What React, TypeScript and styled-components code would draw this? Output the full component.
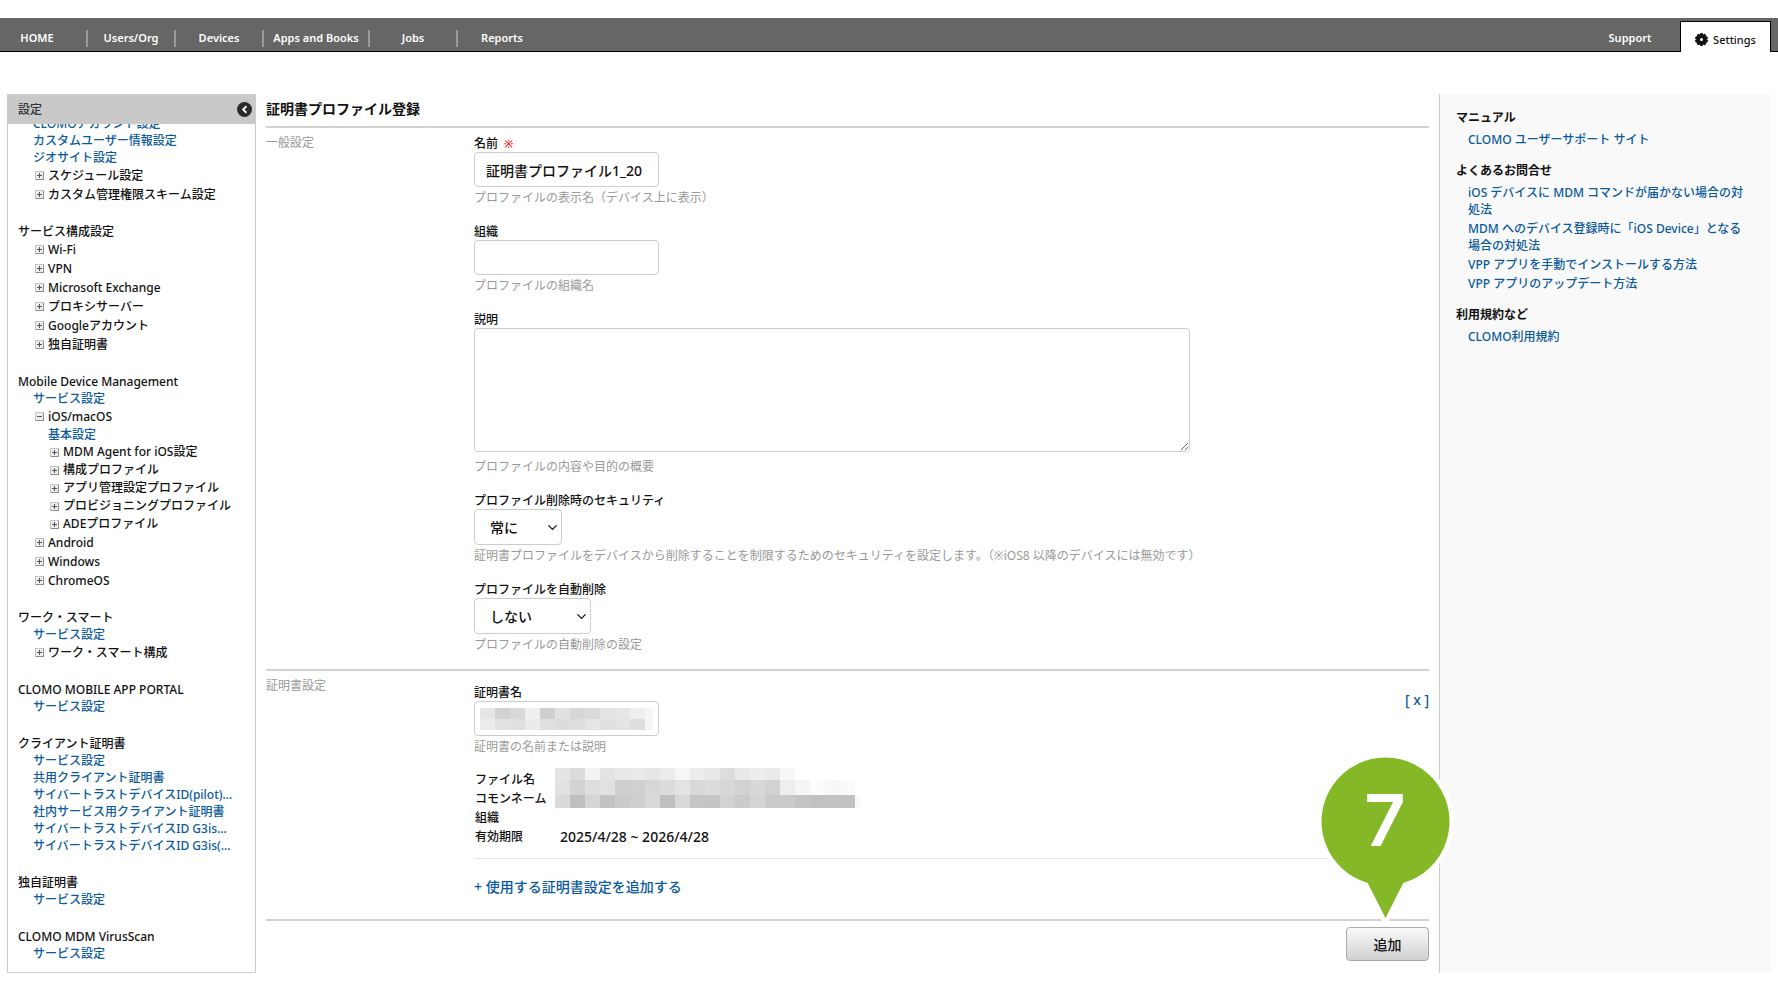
import React from "react";
import styled, { createGlobalStyle, css } from "styled-components";
import { ChevronDown, ChevronLeft } from "lucide-react";

const latin = `"Noto Sans", "Noto Sans CJK JP", sans-serif`;
const linkColor = "#0b5a9b";
const lineColor = "#cccccc";

const GlobalStyle = createGlobalStyle`
  *, *::before, *::after { box-sizing: border-box; }
  body {
    margin: 0;
    background: #fff;
    color: #111;
    font: 500 12px/16px ${latin};
  }
  input, select, textarea, button { font-family: inherit; font-weight: inherit; color: inherit; }
  ul { list-style: none; margin: 0; padding: 0; }
`;

const Page = styled.div`
  padding: 18px 0 27px;
`;

/* ---------- top navigation ---------- */

const TopBar = styled.header`
  display: flex;
  align-items: stretch;
  height: 34px;
  padding-right: 7px;
  background: #666;
  border-bottom: 1px solid #000;
`;

const Menu = styled.nav`
  display: flex;
  flex: 1;
  padding-top: 12px;
`;

const MenuLink = styled.a<{ $wide?: boolean; $first?: boolean; $last?: boolean }>`
  width: ${(p) => (p.$wide ? 106 : 88)}px;
  height: 17px;
  padding-right: ${(p) => (p.$first ? 12 : 0)}px;
  border-right: ${(p) => (p.$last ? 0 : 2)}px solid #999;
  color: #fff;
  font-size: 11px;
  line-height: 16px;
  font-weight: 600;
  text-align: center;
  text-decoration: none;
  white-space: nowrap;
`;

const SupportLink = styled(MenuLink)`
  width: 100px;
  margin-top: 12px;
`;

const SettingsTab = styled.a`
  display: flex;
  align-items: center;
  justify-content: center;
  gap: 5px;
  width: 91px;
  margin: 3px 0 -1px;
  border: 1px solid #000;
  border-bottom: 0;
  background: #fff;
  color: #111;
  font-size: 11px;
  font-weight: 500;
  padding-top: 5px;
  text-decoration: none;
`;

/* ---------- page columns ---------- */

const Columns = styled.div`
  display: grid;
  grid-template-columns: 249px minmax(0, 1fr) 332px;
  margin: 42px 7px 0 7px;
`;

const Sidebar = styled.aside`
  border: 1px solid ${lineColor};
`;

const SidebarHead = styled.div`
  display: flex;
  align-items: center;
  justify-content: space-between;
  height: 29px;
  padding: 0 3px 0 10px;
  background: #c9c9c9;
  color: #333;
`;

const CollapseButton = styled.button`
  display: grid;
  place-items: center;
  width: 15px;
  height: 15px;
  padding: 0;
  border: 0;
  border-radius: 50%;
  background: #2b2b2b;
  color: #fff;
`;

const SidebarScroll = styled.div`
  overflow: hidden;
  padding-bottom: 10px;
`;

const Group = styled.section<{ $scrolled?: boolean; $endsInLink?: boolean }>`
  margin-top: ${(p) => (p.$scrolled ? -9 : 0)}px;
  margin-bottom: ${(p) => (p.$endsInLink ? 20 : 19)}px;
  padding-left: 10px;
  &:last-child { margin-bottom: 0; }
`;

const GroupTitle = styled.h2`
  margin: 0;
  font-size: 12px;
  line-height: 17px;
  font-weight: 500;
`;

const indent = css<{ $level: number }>`
  padding-left: ${(p) => 15 * p.$level}px;
`;

const LinkRow = styled.li<{ $level: number }>`
  ${indent}
  line-height: 17px;
  white-space: nowrap;
`;

const TreeRow = styled.li<{ $level: number }>`
  ${indent}
  display: flex;
  align-items: center;
  height: ${(p) => (p.$level > 1 ? 18 : 19)}px;
  gap: 4px;
  white-space: nowrap;
`;

const Link = styled.a`
  color: ${linkColor};
  text-decoration: none;
`;

const ToggleButton = styled.button`
  display: flex;
  margin-left: 2px;
  padding: 0;
  border: 0;
  background: none;
`;

/* ---------- form ---------- */

const Main = styled.main`
  padding: 0 10px;
`;

const Title = styled.h1`
  height: 32px;
  margin: 0;
  font-size: 14px;
  line-height: 30px;
  font-weight: 700;
`;

const Section = styled.section<{ $tall?: boolean }>`
  display: grid;
  grid-template-columns: 208px minmax(0, 1fr);
  border-top: 2px solid #d2d2d2;
  padding: ${(p) => (p.$tall ? "14px 0 20px" : "8px 0 15px")};
`;

const SectionName = styled.h2<{ $raised?: boolean }>`
  margin: ${(p) => (p.$raised ? -7 : -1)}px 0 0;
  color: #999;
  font-size: 12px;
  line-height: 16px;
  font-weight: 400;
`;

const Fields = styled.div<{ $tight?: boolean }>`
  display: flex;
  flex-direction: column;
  gap: ${(p) => (p.$tight ? 14 : 17)}px;
`;

const Field = styled.div`
  display: flex;
  flex-direction: column;
  align-items: flex-start;
`;

const Label = styled.label`
  line-height: 16px;
`;

const Required = styled.span`
  margin-left: 6px;
  color: #f00;
  font-size: 11px;
`;

const Hint = styled.p<{ $spaced?: boolean }>`
  margin: ${(p) => (p.$spaced ? 6 : 2)}px 0 0;
  color: #999;
  font-weight: 400;
  line-height: 18px;
`;

const control = css`
  border: 1px solid ${lineColor};
  border-radius: 4px;
  background: #fff;
  font-size: 14px;
`;

const TextInput = styled.input`
  ${control}
  display: block;
  width: 185px;
  height: 35px;
  padding: 0 11px;
`;

const TextArea = styled.textarea`
  ${control}
  display: block;
  width: 75%;
  height: 124px;
  padding: 8px 11px;
  resize: both;
`;

const SelectBox = styled.span<{ $width: number }>`
  position: relative;
  width: ${(p) => p.$width}px;
  svg {
    position: absolute;
    right: 2px;
    top: 11px;
    pointer-events: none;
  }
`;

const Select = styled.select`
  ${control}
  display: block;
  appearance: none;
  width: 100%;
  height: 36px;
  padding: 0 15px;
`;

const MaskedField = styled.div`
  position: relative;
  > svg { position: absolute; left: 6px; top: 7px; }
`;

const CertHead = styled.div`
  display: flex;
  justify-content: space-between;
`;

const RemoveButton = styled.button`
  align-self: flex-start;
  margin-top: 5px;
  padding: 0;
  border: 0;
  background: none;
  color: ${linkColor};
  font-size: 14px;
  line-height: 20px;
`;

const CertTable = styled.table`
  width: 100%;
  border-collapse: collapse;
  th, td { padding: 0; height: 19px; font-weight: 500; text-align: left; line-height: 19px; }
  th { width: 86px; padding-left: 1px; }
  td { font-size: 14px; }
`;

const CertInfo = styled.div`
  position: relative;
  margin-bottom: 2px;
  padding-bottom: 12px;
  border-bottom: 1px solid #e4e4ec;
  > svg { position: absolute; left: 81px; top: -2px; }
`;

const AddLink = styled.a`
  color: ${linkColor};
  font-size: 14px;
  line-height: 24px;
  text-decoration: none;
`;

const Actions = styled.div`
  display: flex;
  justify-content: flex-end;
  border-top: 2px solid #d2d2d2;
  padding: 6px 0 0;
`;

const SubmitWrap = styled.div`
  position: relative;
`;

const SubmitButton = styled.button`
  width: 83px;
  height: 34px;
  border: 1px solid #aaa;
  border-radius: 4px;
  background: linear-gradient(#fafafa, #d0d0d0);
  font-size: 14px;
`;

const Pin = styled.div`
  position: absolute;
  right: -25px;
  bottom: 35px;
  width: 138px;
  height: 172px;
  svg { display: block; }
`;

const PinNumber = styled.span`
  position: absolute;
  inset: 0 0 40px;
  display: grid;
  place-items: center;
  color: #fff;
  font: 600 72px/1 Inter, "Liberation Sans", sans-serif;
`;

/* ---------- help panel ---------- */

const Help = styled.aside`
  padding: 15px 24px 0 16px;
  border-left: 1px solid ${lineColor};
  background: #f9f9f9;
`;

const HelpGroup = styled.section`
  margin-bottom: 14px;
`;

const HelpTitle = styled.h2`
  margin: 0 0 5px;
  font-size: 12px;
  line-height: 17px;
  font-weight: 700;
`;

const HelpItem = styled.li`
  padding-left: 12px;
  margin-bottom: 2px;
  line-height: 17px;
`;

/* ---------- data ---------- */

type Row = { text: string; kind: "link" | "closed" | "open"; level?: number };
type NavGroup = { title?: string; rows: Row[] };

const link = (text: string, level = 1): Row => ({ text, kind: "link", level });
const closed = (text: string, level = 1): Row => ({ text, kind: "closed", level });
const open = (text: string, level = 1): Row => ({ text, kind: "open", level });

const groups: NavGroup[] = [
  {
    rows: [
      link("CLOMOアカウント設定"),
      link("カスタムユーザー情報設定"),
      link("ジオサイト設定"),
      closed("スケジュール設定"),
      closed("カスタム管理権限スキーム設定"),
    ],
  },
  {
    title: "サービス構成設定",
    rows: ["Wi-Fi", "VPN", "Microsoft Exchange", "プロキシサーバー", "Googleアカウント", "独自証明書"].map((t) => closed(t)),
  },
  {
    title: "Mobile Device Management",
    rows: [
      link("サービス設定"),
      open("iOS/macOS"),
      link("基本設定", 2),
      closed("MDM Agent for iOS設定", 2),
      closed("構成プロファイル", 2),
      closed("アプリ管理設定プロファイル", 2),
      closed("プロビジョニングプロファイル", 2),
      closed("ADEプロファイル", 2),
      closed("Android"),
      closed("Windows"),
      closed("ChromeOS"),
    ],
  },
  { title: "ワーク・スマート", rows: [link("サービス設定"), closed("ワーク・スマート構成")] },
  { title: "CLOMO MOBILE APP PORTAL", rows: [link("サービス設定")] },
  {
    title: "クライアント証明書",
    rows: [
      link("サービス設定"),
      link("共用クライアント証明書"),
      link("サイバートラストデバイスID(pilot)…"),
      link("社内サービス用クライアント証明書"),
      link("サイバートラストデバイスID G3is…"),
      link("サイバートラストデバイスID G3is(…"),
    ],
  },
  { title: "独自証明書", rows: [link("サービス設定")] },
  { title: "CLOMO MDM VirusScan", rows: [link("サービス設定")] },
];

const helpGroups = [
  { title: "マニュアル", items: ["CLOMO ユーザーサポート サイト"] },
  {
    title: "よくあるお問合せ",
    items: [
      "iOS デバイスに MDM コマンドが届かない場合の対処法",
      "MDM へのデバイス登録時に「iOS Device」となる場合の対処法",
      "VPP アプリを手動でインストールする方法",
      "VPP アプリのアップデート方法",
    ],
  },
  { title: "利用規約など", items: ["CLOMO利用規約"] },
];

type MosaicRow = { height: number; shades: string };

const nameMosaic: MosaicRow[] = [
  { height: 11, shades: "e6 d2 d9 ef cf e1 d7 da e3 e6 ef f6" },
  { height: 11, shades: "ec e2 e0 eb e0 dc de e6 e0 e4 de f5" },
];

const certMosaic: MosaicRow[] = [
  { height: 12, shades: "e4 dc f3 e3 e9 ea e6 ec f6 ec e8 dd e9 ed ea f7" },
  { height: 15, shades: "e1 d3 dd e1 cf d0 d7 dc e3 d9 dc d7 d2 d8 d2 ee f5 fc f8 fa" },
  { height: 13, shades: "da bf d5 c2 cb cf d9 c0 d9 c6 c5 d2 cb d5 ca ca c4 c1 c2 c2 fa" },
];

/* ---------- drawings ---------- */

function Mosaic({ rows, width }: { rows: MosaicRow[]; width: number }) {
  const height = rows.reduce((sum, r) => sum + r.height, 0);
  let y = 0;
  return (
    <svg width={width} height={height} shapeRendering="crispEdges" aria-hidden="true">
      {rows.map((row) => {
        const top = y;
        y += row.height;
        return row.shades.split(" ").map((s, i) => (
          <rect key={`${top}-${i}`} x={i * 15} y={top} width={15} height={row.height} fill={`#${s}${s}${s}`} />
        ));
      })}
    </svg>
  );
}

function TreeIcon({ isOpen }: { isOpen: boolean }) {
  return (
    <svg width="9" height="9" viewBox="0 0 9 9" shapeRendering="crispEdges">
      <rect x="0" y="0" width="9" height="9" fill="#c4c4c4" />
      <rect x="8" y="1" width="1" height="8" fill="#8c8c8c" />
      <rect x="1" y="8" width="8" height="1" fill="#8c8c8c" />
      <rect x="1" y="1" width="7" height="7" fill="#ededed" />
      <rect x="2" y="4" width="5" height="1" fill="#555" />
      {!isOpen && <rect x="4" y="2" width="1" height="5" fill="#555" />}
    </svg>
  );
}

function Gear() {
  return (
    <svg width="13" height="13" viewBox="0 0 13 13" aria-hidden="true">
      <g fill="#111">
        {[0, 36, 72, 108, 144].map((a) => (
          <rect key={a} x="5" y="0" width="3" height="13" rx="1" transform={`rotate(${a} 6.5 6.5)`} />
        ))}
        <circle cx="6.5" cy="6.5" r="5" />
      </g>
      <circle cx="6.5" cy="6.5" r="1.5" fill="#fff" />
    </svg>
  );
}

function PinShape() {
  const shape = "M51.7 129A64 64 0 1 1 87.3 129L69.5 164Z";
  return (
    <svg width="138" height="172" viewBox="0 0 138 172" aria-hidden="true">
      <path d={shape} fill="#85b827" stroke="#fff" strokeWidth="9" strokeLinejoin="round" paintOrder="stroke" />
    </svg>
  );
}

/* ---------- components ---------- */

function NavRow({ row }: { row: Row }) {
  const level = row.level ?? 1;
  if (row.kind === "link") {
    return (
      <LinkRow $level={level}>
        <Link href="#">{row.text}</Link>
      </LinkRow>
    );
  }
  const isOpen = row.kind === "open";
  return (
    <TreeRow $level={level}>
      <ToggleButton type="button" aria-expanded={isOpen} aria-label={row.text}>
        <TreeIcon isOpen={isOpen} />
      </ToggleButton>
      {row.text}
    </TreeRow>
  );
}

function SelectField({ id, label, hint, value, width }: { id: string; label: string; hint: string; value: string; width: number }) {
  return (
    <Field>
      <Label htmlFor={id}>{label}</Label>
      <SelectBox $width={width}>
        <Select id={id} defaultValue={value}>
          <option>{value}</option>
        </Select>
        <ChevronDown size={15} strokeWidth={2} />
      </SelectBox>
      <Hint>{hint}</Hint>
    </Field>
  );
}

export default function App() {
  return (
    <>
      <GlobalStyle />
      <Page lang="ja">
        <TopBar>
          <Menu>
            <MenuLink href="#" $first>HOME</MenuLink>
            <MenuLink href="#">Users/Org</MenuLink>
            <MenuLink href="#">Devices</MenuLink>
            <MenuLink href="#" $wide>Apps and Books</MenuLink>
            <MenuLink href="#">Jobs</MenuLink>
            <MenuLink href="#" $last>Reports</MenuLink>
          </Menu>
          <SupportLink href="#" $last>Support</SupportLink>
          <SettingsTab href="#">
            <Gear />
            Settings
          </SettingsTab>
        </TopBar>

        <Columns>
          <Sidebar>
            <SidebarHead>
              設定
              <CollapseButton type="button" aria-label="閉じる">
                <ChevronLeft size={11} strokeWidth={4} />
              </CollapseButton>
            </SidebarHead>
            <SidebarScroll>
              {groups.map((g, i) => (
                <Group key={i} $scrolled={i === 0} $endsInLink={g.rows[g.rows.length - 1].kind === "link"}>
                  {g.title && <GroupTitle>{g.title}</GroupTitle>}
                  <ul>
                    {g.rows.map((r) => (
                      <NavRow key={r.text} row={r} />
                    ))}
                  </ul>
                </Group>
              ))}
            </SidebarScroll>
          </Sidebar>

          <Main>
            <Title>証明書プロファイル登録</Title>
            <Section>
              <SectionName>一般設定</SectionName>
              <Fields>
                <Field>
                  <Label htmlFor="name">
                    名前<Required>※</Required>
                  </Label>
                  <TextInput id="name" defaultValue="証明書プロファイル1_20" />
                  <Hint>プロファイルの表示名（デバイス上に表示）</Hint>
                </Field>
                <Field>
                  <Label htmlFor="org">組織</Label>
                  <TextInput id="org" />
                  <Hint>プロファイルの組織名</Hint>
                </Field>
                <Field>
                  <Label htmlFor="desc">説明</Label>
                  <TextArea id="desc" />
                  <Hint $spaced>プロファイルの内容や目的の概要</Hint>
                </Field>
                <SelectField
                  id="security"
                  label="プロファイル削除時のセキュリティ"
                  value="常に"
                  width={88}
                  hint="証明書プロファイルをデバイスから削除することを制限するためのセキュリティを設定します。（※iOS8 以降のデバイスには無効です）"
                />
                <SelectField id="autodelete" label="プロファイルを自動削除" value="しない" width={117} hint="プロファイルの自動削除の設定" />
              </Fields>
            </Section>

            <Section $tall>
              <SectionName $raised>証明書設定</SectionName>
              <Fields $tight>
                <CertHead>
                  <Field>
                    <Label htmlFor="cert">証明書名</Label>
                    <MaskedField>
                      <TextInput id="cert" />
                      <Mosaic rows={nameMosaic} width={173} />
                    </MaskedField>
                    <Hint>証明書の名前または説明</Hint>
                  </Field>
                  <RemoveButton type="button">[ x ]</RemoveButton>
                </CertHead>
                <CertInfo>
                  <CertTable>
                    <tbody>
                      <tr><th scope="row">ファイル名</th><td /></tr>
                      <tr><th scope="row">コモンネーム</th><td /></tr>
                      <tr><th scope="row">組織</th><td /></tr>
                      <tr><th scope="row">有効期限</th><td>2025/4/28 ~ 2026/4/28</td></tr>
                    </tbody>
                  </CertTable>
                  <Mosaic rows={certMosaic} width={305} />
                </CertInfo>
                <AddLink href="#">+ 使用する証明書設定を追加する</AddLink>
              </Fields>
            </Section>

            <Actions>
              <SubmitWrap>
                <SubmitButton type="submit">追加</SubmitButton>
                <Pin>
                  <PinShape />
                  <PinNumber>7</PinNumber>
                </Pin>
              </SubmitWrap>
            </Actions>
          </Main>

          <Help>
            {helpGroups.map((g) => (
              <HelpGroup key={g.title}>
                <HelpTitle>{g.title}</HelpTitle>
                <ul>
                  {g.items.map((t) => (
                    <HelpItem key={t}>
                      <Link href="#">{t}</Link>
                    </HelpItem>
                  ))}
                </ul>
              </HelpGroup>
            ))}
          </Help>
        </Columns>
      </Page>
    </>
  );
}
